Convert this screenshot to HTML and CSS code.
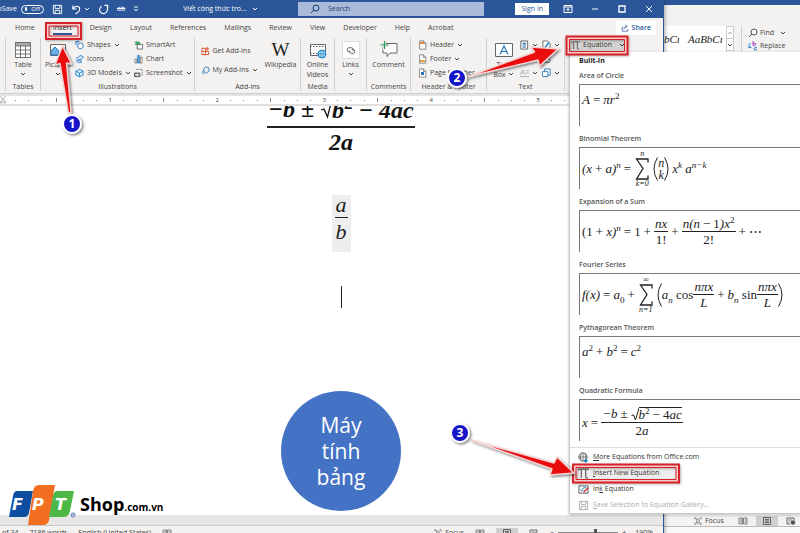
FILE: index.html
```html
<!DOCTYPE html>
<html lang="en">
<head>
<meta charset="utf-8">
<title>Word - Insert Equation</title>
<link rel="stylesheet" href="styles.css">
</head>
<body>
<svg class="defs" aria-hidden="true">
  <symbol id="chev" viewBox="0 0 6 6"><path d="M1 2l2 2 2-2" fill="none" stroke="currentColor"/></symbol>
  <symbol id="save" viewBox="0 0 12 12"><path d="M1.500 1.500h9v9h-9zM3.500 1.500v3.500h5v-3.500M3.500 10.500v-3.500h5v3.500" fill="none" stroke="currentColor"/></symbol>
  <symbol id="pi" viewBox="0 0 10 10"><path d="M0 2.500Q.5 1 2 1h8M3 1v8M7 1v7q0 1.500 2 1" fill="none" stroke="#555"/></symbol>
  <symbol id="book" viewBox="0 0 10 8"><path d="M1 1h3.500v6H1zM5.500 1H9v6H5.500zM2 3h2M2 5h2M6.500 3h2M6.500 5h2" fill="none" stroke="#666" stroke-width=".8"/></symbol>
  <symbol id="print" viewBox="0 0 10 8"><path d="M1.500 .5h7v7h-7zM3 2.500h4M3 4h4M3 5.500h4" fill="none" stroke="#555" stroke-width=".9"/></symbol>
  <symbol id="web" viewBox="0 0 10 8"><path d="M1 1h7v2M1 1v6h3M2.500 3h3M2.500 5h1" fill="none" stroke="#555" stroke-width=".9"/><circle cx="7" cy="5.500" r="2.300" fill="#555"/></symbol>
  <symbol id="focus" viewBox="0 0 10 10"><path d="M1 3V1h2M7 1h2v2M1 7v2h2M9 7v2H7M3.500 2.500h2l1 1v4h-3z" fill="none" stroke="#555" stroke-width=".9"/></symbol>
  <symbol id="page" viewBox="0 0 10 12"><path d="M1.500 1h4.500l3 3v7H1.500zM6 1v3h3" fill="#fff" stroke="#666" stroke-width=".9"/></symbol>
</svg>

<div class="desktop">
  <section class="back-window" aria-label="Background document">
    <div class="back-title"></div>
    <div class="back-ribbon">
      <div class="styles"><span>bC&#305;</span><span>AaBbC&#305;</span></div>
      <div class="styles-nav"><button aria-label="Up"><svg class="chev up"><use href="#chev"/></svg></button><button aria-label="More"><svg class="chev"><use href="#chev"/></svg></button></div>
      <div class="editing">
        <button><svg viewBox="0 0 10 10"><circle cx="6" cy="4" r="3" fill="none" stroke="#555"/><path d="M4 6L1 9" stroke="#555"/></svg>Find<svg class="chev"><use href="#chev"/></svg></button>
        <button><svg viewBox="0 0 10 10"><path d="M2.500 2Q0 3 1.500 7l2-1M1.500 7L0 5.500" fill="none" stroke="#2b7cc4"/><path d="M5 0v4.500M5 2.500q3-1 3 .7T5 4.300" fill="none" stroke="#b146c2"/><path d="M9 6.800q-3-1-3 1t3 1" fill="none" stroke="#2b7cc4"/></svg>Replace</button>
      </div>
    </div>
    <div class="back-page"></div>
    <div class="back-status"><span><svg><use href="#focus"/></svg>Focus</span><svg><use href="#book"/></svg><span class="active"><svg><use href="#print"/></svg></span><svg><use href="#web"/></svg></div>
    <div class="back-bottom"></div>
  </section>

  <main class="window">
    <header class="titlebar">
      <div class="quick">
        <span class="autosave">AutoSave</span>
        <button class="toggle"><i></i>Off</button>
        <button aria-label="Save"><svg class="q-icon"><use href="#save"/></svg></button>
        <button aria-label="Undo" class="undo"><svg class="q-icon" viewBox="0 0 12 12"><path d="M2 1.500v4h4M2 5.500C4 1.500 9 1.500 9.500 5S7 9 5 11" fill="none" stroke="#fff" stroke-width="1.200"/></svg><svg class="chev"><use href="#chev"/></svg></button>
        <button aria-label="Redo"><svg class="q-icon" viewBox="0 0 12 12"><path d="M7 1.500h3.500V5M10 2.500C11.500 7 9 10.500 6 10.500S1 8 2 5q.5-1.500 2-2.500" fill="none" stroke="#fff" stroke-width="1.200"/></svg></button>
        <button class="strike">ab</button>
        <button aria-label="Customize"><svg class="q-more" viewBox="0 0 6 6"><path d="M1 1h4M1 3l2 2 2-2" fill="none" stroke="#fff"/></svg></button>
        <span class="doc-name">Viết công thức tro...<svg class="chev"><use href="#chev"/></svg></span>
      </div>
      <label class="search"><svg viewBox="0 0 10 10"><circle cx="6" cy="4" r="3" fill="none" stroke="#1c3c70"/><path d="M4 6L1 9" stroke="#1c3c70"/></svg><input type="text" placeholder="Search" aria-label="Search"></label>
      <div class="win-controls">
        <button class="signin">Sign in</button>
        <button aria-label="Ribbon options"><svg viewBox="0 0 10 10"><path d="M1 1.500h8v7H1zM1 3h8M5 7.500V4.500M3.500 6L5 4.500 6.500 6" fill="none" stroke="#fff"/></svg></button>
        <button aria-label="Minimize"><svg viewBox="0 0 10 10"><path d="M2 5h6" stroke="#fff"/></svg></button>
        <button aria-label="Maximize"><svg viewBox="0 0 10 10"><path d="M2 2h6v6H2z" fill="none" stroke="#fff" stroke-width="1.300"/></svg></button>
        <button aria-label="Close"><svg viewBox="0 0 10 10"><path d="M2 2l6 6M8 2L2 8" stroke="#fff"/></svg></button>
      </div>
    </header>

    <nav class="tabs">
      <a href="#">Home</a><a href="#" class="on">Insert</a><a href="#">Design</a><a href="#">Layout</a><a href="#">References</a><a href="#">Mailings</a><a href="#">Review</a><a href="#">View</a><a href="#">Developer</a><a href="#">Help</a><a href="#">Acrobat</a>
      <button class="share"><svg viewBox="0 0 10 10"><path d="M3 4H1.500v5h7V6M3.500 6.500Q4 3 7 3M5.500 1L8 3 5.500 5" fill="none" stroke="#2b579a" stroke-width=".9"/></svg>Share</button>
    </nav>

    <div class="ribbon">
      <section class="group g-edge"></section>
      <section class="group g-tables">
        <div class="tools"><button class="big"><svg viewBox="0 0 18 18"><path d="M1 1h16v16H1z" fill="#fff"/><path d="M1 1h16v4H1z" fill="#aaa"/><path d="M1.500 1.500h15v15h-15zM1.500 5h15M1.500 9h15M1.500 13h15M6.500 5v12M11.500 5v12" fill="none" stroke="#666" stroke-width=".9"/></svg><span>Table</span><svg class="chev"><use href="#chev"/></svg></button></div>
        <h2>Tables</h2>
      </section>
      <section class="group g-illus">
        <div class="tools">
          <button class="big"><svg viewBox="0 0 18 18"><path d="M1.500 3.500h15v11h-15z" fill="#fff" stroke="#666"/><path d="M2 14V10l4-4 4 4v4z" fill="#6cb0e6" stroke="#2a75b8"/><path d="M10 10l2-2 4 4v2h-6z" fill="#b8daf4"/><circle cx="13.500" cy="6" r="1.200" fill="#e59a3d"/></svg><span>Pictures</span><svg class="chev"><use href="#chev"/></svg></button>
          <div class="stack s1">
            <button><svg viewBox="0 0 10 10"><path d="M1 5V1h4" fill="#9ccbf0" stroke="#2a75b8"/><circle cx="6" cy="6" r="3.200" fill="#fff" stroke="#2a75b8"/></svg>Shapes<svg class="chev"><use href="#chev"/></svg></button>
            <button><svg viewBox="0 0 10 10"><path d="M1 4q3 0 4-2.500 2-1 3 .5L9.500 3 8 4Q7 7 4 6M2 6l5 1v2H3Q1 8 2 6" fill="#cfe6f8" stroke="#2a75b8" stroke-width=".9"/></svg>Icons</button>
            <button><svg viewBox="0 0 10 10"><path d="M5 .8l4 2.200v4.200L5 9.200 1 7.200V3zM1 3l4 2.200L9 3M5 5.200v4" fill="#e6f3fc" stroke="#1581c8"/></svg>3D Models<svg class="chev"><use href="#chev"/></svg></button>
          </div>
          <div class="stack s2">
            <button><svg viewBox="0 0 10 10"><path d="M.5 1h5l2 2-2 2h-5l1.500-2z" fill="#45a868"/><path d="M3.500 4.500h6v5h-6z" fill="#fff" stroke="#666"/></svg>SmartArt</button>
            <button><svg viewBox="0 0 10 10"><path d="M1 5h2v4.500H1z" fill="#fff" stroke="#666" stroke-width=".8"/><path d="M4 1h2v8.500H4z" fill="#5ba5df" stroke="#2a75b8" stroke-width=".8"/><path d="M7 3h2v6.500H7z" fill="#fff" stroke="#666" stroke-width=".8"/></svg>Chart</button>
            <button><svg viewBox="0 0 10 10"><path d="M2 1h7v7" fill="none" stroke="#666" stroke-dasharray="1.500 1"/><path d="M.5 5h6v4h-6z" fill="#aaa" stroke="#555"/><circle cx="3.500" cy="7" r="1" fill="#fff"/></svg>Screenshot<svg class="chev"><use href="#chev"/></svg></button>
          </div>
        </div>
        <h2>Illustrations</h2>
      </section>
      <section class="group g-addins">
        <div class="tools">
          <div class="stack two">
            <button><svg viewBox="0 0 10 10"><path d="M1 2h4v7H1zM1 5.500h7.500V9H1M7 .5v4M5 2.500h4" fill="none" stroke="#d8512b"/></svg>Get Add-ins</button>
            <button><svg viewBox="0 0 10 10"><path d="M5 1.500L8.500 2.500 9 6 6 8.500 3.500 7 3 3.500zM3 6a1.500 1.500 0 1 0 1 2.500" fill="none" stroke="#2a75b8"/></svg>My Add-ins<svg class="chev"><use href="#chev"/></svg></button>
          </div>
          <button class="big wiki"><b>W</b><span>Wikipedia</span></button>
        </div>
        <h2>Add-ins</h2>
      </section>
      <section class="group g-media">
        <div class="tools"><button class="big"><svg viewBox="0 0 18 18"><path d="M1.500 3.500h15v11h-15z" fill="#fff" stroke="#666"/><path d="M1 5.500h16M1 12.500h16" stroke="#555" stroke-dasharray="1.500 1.500"/><circle cx="13" cy="13" r="4" fill="#d9eefb" stroke="#1581c8"/><path d="M9 13h8M13 9v8M11.500 9.500q-1 3.500 0 7M14.500 9.500q1 3.500 0 7" fill="none" stroke="#1581c8" stroke-width=".7"/></svg><span>Online<br>Videos</span></button></div>
        <h2>Media</h2>
      </section>
      <section class="group g-links">
        <div class="tools"><button class="big boxed"><svg viewBox="0 0 18 18"><path d="M8 11H6.500a2.300 2.300 0 0 1 0-4.500h3a2.300 2.300 0 0 1 1.500 4M10 8.500h1.500a2.300 2.300 0 0 1 0 4.500h-2A2.300 2.300 0 0 1 8 9.500" fill="none" stroke="#555"/></svg><span>Links</span><svg class="chev"><use href="#chev"/></svg></button></div>
      </section>
      <section class="group g-comments">
        <div class="tools"><button class="big"><svg viewBox="0 0 18 18"><path d="M3 2.500h14v9.500h-7l-3 3.500V12H3z" fill="#fff" stroke="#666"/><path d="M4.500 0v9M0 4.500h9" stroke="#f3f2f1" stroke-width="3"/><path d="M4.500 0v8M.5 4h8" stroke="#2f9a58" stroke-width="1.200"/></svg><span>Comment</span></button></div>
        <h2>Comments</h2>
      </section>
      <section class="group g-hf">
        <div class="tools"><div class="stack">
          <button><svg><use href="#page"/><path d="M2 2h4v2H2z" fill="#e08a3c"/></svg>Header<svg class="chev"><use href="#chev"/></svg></button>
          <button><svg><use href="#page"/><path d="M2 6h5v2H2z" fill="#e0a13c"/></svg>Footer<svg class="chev"><use href="#chev"/></svg></button>
          <button><svg><use href="#page"/><path d="M3 4h3v3H3z" fill="#2a75b8"/></svg>Page Number<svg class="chev"><use href="#chev"/></svg></button>
        </div></div>
        <h2>Header &amp; Footer</h2>
      </section>
      <section class="group g-text">
        <div class="tools">
          <button class="big textbox"><svg viewBox="0 0 18 16"><path d="M.5 1.500h17v13H.5z" fill="#fff" stroke="#666"/><path d="M5 12.500L9 4l4 8.500M6.500 9.500h5" fill="none" stroke="#2a75b8" stroke-width="1.200"/></svg><span>Text<br>Box <svg class="chev"><use href="#chev"/></svg></span></button>
          <div class="stack">
            <button aria-label="Quick parts"><svg viewBox="0 0 10 10"><path d="M1 .5h7.500v9H1z" fill="#fff" stroke="#555"/><path d="M3 2.500h3.500v2H3z" fill="#2a75b8"/><path d="M3 6h3.500M3 7.500h3.500" stroke="#2a75b8"/></svg><svg class="chev"><use href="#chev"/></svg></button>
            <button aria-label="WordArt"><svg viewBox="0 0 10 10"><path d="M1 9l3.500-8L8 9M2.500 6h4" fill="none" stroke="#2a75b8"/></svg><svg class="chev"><use href="#chev"/></svg></button>
            <button aria-label="Drop cap"><svg viewBox="0 0 10 10"><path d="M.5 7L3 1.500 5.500 7M1.500 5h3M6.500 2.500H10M6.500 5H10M0 9h10" fill="none" stroke="#aaa"/></svg><svg class="chev"><use href="#chev"/></svg></button>
          </div>
          <div class="stack">
            <button aria-label="Signature"><svg viewBox="0 0 10 10"><path d="M1 .5h5l3 3v6H1z" fill="#fff" stroke="#666"/><path d="M3 8l5-6" stroke="#1581c8" stroke-width="1.600"/></svg><svg class="chev"><use href="#chev"/></svg></button>
            <button aria-label="Date and time"><svg viewBox="0 0 10 10"><path d="M1 1.500h7v7H1z" fill="#fff" stroke="#2a75b8"/><circle cx="6.500" cy="6.500" r="2.500" fill="#fff" stroke="#555"/></svg></button>
            <button aria-label="Object"><svg viewBox="0 0 10 10"><path d="M3 .5h6v7H3z" fill="#fff" stroke="#2a75b8"/><path d="M.5 3.500h6v5.500h-6z" fill="#fff" stroke="#2a75b8"/></svg><svg class="chev"><use href="#chev"/></svg></button>
          </div>
        </div>
        <h2>Text</h2>
      </section>
      <section class="group g-symbols">
        <button class="equation"><svg><use href="#pi"/></svg>Equation<svg class="chev"><use href="#chev"/></svg></button>
      </section>
    </div>

    <div class="ruler">
      <div class="ruler-start"><svg viewBox="0 0 6 12"><path d="M.5.5h5v2L3 5 .5 2.500zM3 5l2.500 2.500v4h-5v-4zM.5 8.500h5" fill="#fff" stroke="#888" stroke-width=".8"/></svg><i></i><i></i><i></i></div>
      <div class="inch"><em></em><i></i><i></i><i></i><b>1</b><i></i><i></i><i></i></div>
      <div class="inch"><em></em><i></i><i></i><i></i><b>2</b><i></i><i></i><i></i></div>
      <div class="inch"><em></em><i></i><i></i><i></i><b>3</b><i></i><i></i><i></i></div>
      <div class="inch"><em></em><i></i><i></i><i></i><b>4</b><i></i><i></i><i></i></div>
      <div class="inch"><em></em><i></i><i></i><i></i><b>5</b><i></i><i></i><i></i></div>
    </div>

    <article class="document">
      <div class="math doc-quad"><span class="frac"><span class="num"><span>−b ± <span class="root"><svg viewBox="0 0 12 20"><path d="M1 12l3-1 3.500 8L12 1" fill="none" stroke="#111" stroke-width="1.300"/></svg><span class="radicand">b<sup>2</sup> − 4ac</span></span></span></span><span class="den">2a</span></span></div>
      <div class="math doc-frac"><span class="frac"><span class="num">a</span><span class="den">b</span></span></div>
      <div class="caret"></div>
      <div class="bubble">Máy<br>tính<br>bảng</div>
    </article>
    <div class="scroll-band"></div>
    <footer class="status">
      <span>of 34</span><span>7186 words</span><span>English (United States)</span><svg><use href="#book"/></svg>
      <div class="views"><span><svg><use href="#focus"/></svg>Focus</span><svg><use href="#book"/></svg><span class="active"><svg><use href="#print"/></svg></span><svg><use href="#web"/></svg></div>
      <div class="zoom"><span>−</span><input type="range" min="0" max="100" value="62" aria-label="Zoom"><span>+</span><span class="pct">190%</span></div>
    </footer>
  </main>

  <aside class="menu">
    <h2>Built-In</h2>
    <ul class="gallery">
      <li><h3>Area of Circle</h3><div class="math"><span>A<o>=</o>πr<sup>2</sup></span></div></li>
      <li><h3>Binomial Theorem</h3><div class="math"><span>(x<o>+</o>a)<sup class="it">n</sup></span><o>=</o><span class="sum"><small>n</small><svg viewBox="0 0 14 22"><use href="#sigma"/></svg><small>k=0</small></span><svg class="paren lead" viewBox="0 0 5 24"><path d="M4.500.5q-7 11.500 0 23" fill="none" stroke="#222"/></svg><span class="binom"><span>n</span><span>k</span></span><svg class="paren" viewBox="0 0 5 24"><path d="M.5.5q7 11.500 0 23" fill="none" stroke="#222"/></svg><span class="gap">x<sup class="it">k</sup> a<sup class="it">n−k</sup></span></div></li>
      <li><h3>Expansion of a Sum</h3><div class="math"><span><r>(1</r><o>+</o>x)<sup class="it">n</sup><o>=</o><r>1</r><o>+</o></span><span class="frac"><span class="num">nx</span><span class="den rm">1!</span></span><o>+</o><span class="frac"><span class="num"><span>n(n<o>−</o><r>1</r>)x<sup>2</sup></span></span><span class="den rm">2!</span></span><o>+</o><r>⋯</r></div></li>
      <li><h3>Fourier Series</h3><div class="math"><span>f(x)<o>=</o>a<sub>0</sub><o>+</o></span><span class="sum"><small>∞</small><svg viewBox="0 0 14 22"><use href="#sigma"/></svg><small>n=1</small></span><svg class="paren lead" viewBox="0 0 5 24"><path d="M4.500.5q-7 11.500 0 23" fill="none" stroke="#222"/></svg><span>a<sub class="it">n</sub> <r>cos</r></span><span class="frac"><span class="num">nπx</span><span class="den">L</span></span><o>+</o><span>b<sub class="it">n</sub> <r>sin</r></span><span class="frac"><span class="num">nπx</span><span class="den">L</span></span><svg class="paren" viewBox="0 0 5 24"><path d="M.5.5q7 11.500 0 23" fill="none" stroke="#222"/></svg></div></li>
      <li><h3>Pythagorean Theorem</h3><div class="math"><span>a<sup>2</sup><o>+</o>b<sup>2</sup><o>=</o>c<sup>2</sup></span></div></li>
      <li><h3>Quadratic Formula</h3><div class="math low"><span>x<o>=</o></span><span class="frac"><span class="num"><span>−b<o>±</o></span><span class="root"><svg viewBox="0 0 8 14"><path d="M.5 8.500L2.500 8l2 5L8 1" fill="none" stroke="#222"/></svg><span class="radicand">b<sup>2</sup><o>−</o><r>4</r>ac</span></span></span><span class="den"><r>2</r>a</span></span></div></li>
    </ul>
    <div class="actions">
      <button><svg viewBox="0 0 12 12"><circle cx="5.500" cy="5.500" r="4.500" fill="#fff" stroke="#555"/><path d="M1 5.500h9M5.500 1v9M3.500 1.500q-2 4 0 8M7.500 1.500q2 4 0 8" fill="none" stroke="#555" stroke-width=".8"/><path d="M8.500 7v4M6.500 9l2 2 2-2" fill="none" stroke="#1581c8" stroke-width="1.300"/></svg><span><u>M</u>ore Equations from Office.com</span></button>
      <button class="hot"><svg><use href="#pi"/></svg><span><u>I</u>nsert New Equation</span></button>
      <button><svg viewBox="0 0 12 12"><path d="M1 2h10v8H1z" fill="#fff" stroke="#555"/><path d="M2.500 6l1.500 2 2-4h3" fill="none" stroke="#1581c8"/><path d="M6 9l5-5" stroke="#d33" stroke-width="1.600"/></svg><span>In<u>k</u> Equation</span></button>
      <button disabled><svg><use href="#save"/></svg><span><u>S</u>ave Selection to Equation Gallery...</span></button>
    </div>
  </aside>

  <div class="brand">
    <svg viewBox="0 0 70 42">
      <path d="M9 7h16l-4 22q-1 4-5 4H1l4-21q1-5 4-5z" fill="#0d4ea2"/>
      <path d="M31 1h16l-6 35q-1 5-6 5H20l5-34q1-6 6-6z" fill="#f26f21"/>
      <path d="M49 7h17l-4 20q-1 6-7 6H41l4-21q1-5 4-5z" fill="#4db848"/>
      <g class="fpt"><text x="4" y="26">F</text><text x="24" y="26">P</text><text x="47" y="26">T</text></g>
      <circle cx="65" cy="31" r="2" fill="#fff" stroke="#2553a0" stroke-width=".8"/><circle cx="65" cy="31" r=".7" fill="#2553a0"/>
    </svg>
    <span class="shop">Shop<small>.com.vn</small></span>
  </div>

  <svg class="callouts" viewBox="0 0 800 533" aria-hidden="true">
    <defs>
      <symbol id="sigma" viewBox="0 0 14 22"><path d="M13 4.500V1H1.500L8 10.500 1.500 21H13v-3.500" fill="none" stroke="#222" stroke-width="1.300"/></symbol>
      <filter id="sh" x="-20%" y="-20%" width="150%" height="150%"><feDropShadow dx="1.500" dy="1.500" stdDeviation="1.200" flood-color="#333" flood-opacity=".6"/></filter>
      <filter id="soft" x="-20%" y="-20%" width="150%" height="150%"><feDropShadow dx="1" dy="1" stdDeviation=".8" flood-color="#333" flood-opacity=".35"/></filter>
    </defs>
    <g filter="url(#soft)" fill="none">
      <g stroke="#f5cccc" stroke-width="3"><path d="M47.500 24.500h32v13h-32z"/><path d="M568 38h58v15h-58z"/><path d="M574.500 466.500h103v14h-103z"/></g>
      <g stroke="#d4202a"><path stroke-width="2" d="M46 23h35v16H46zM566.500 36.500h61v18h-61zM573 464.500h106v18H573z"/><path d="M49 26h29v10H49zM569.500 39.500h55v12h-55zM576 467.500h100v12H576z"/></g>
    </g>
    <g filter="url(#sh)" fill="#ea0c0c" stroke="#f4d4d4" stroke-width="1.400" stroke-linejoin="round">
      <path d="M62.500 46L55 65l5-1.500L68.500 113l2.500-.5L66.500 63l5 1z"/>
      <path d="M467 77L538 60l1.500 6 18.500-17-27-2 3.500 5z"/>
      <path d="M471 440L552 469l-2 6 24-2-17-16-3 6z"/>
    </g>
    <g filter="url(#sh)" fill="#1414c8" stroke="#fff" stroke-width="2"><circle cx="72" cy="124" r="9"/><circle cx="457" cy="78" r="9"/><circle cx="460" cy="433" r="9"/></g>
    <g class="badge-no"><text x="72" y="128">1</text><text x="457" y="82">2</text><text x="460" y="437">3</text></g>
  </svg>
</div>
</body>
</html>
```
FILE: styles.css
```css
* { box-sizing: border-box; margin: 0; padding: 0; }
body { font: 7px/10px "Open Sans", "Noto Sans", sans-serif; color: #444; background: #fff; }
button, input { font: inherit; color: inherit; border: 0; background: none; }
button { display: flex; align-items: center; white-space: nowrap; }
a { color: inherit; text-decoration: none; }
ul { list-style: none; }
svg { display: block; flex: none; }
h2, h3 { font-size: inherit; }
.defs { position: absolute; width: 0; height: 0; }
.desktop { position: relative; height: 100vh; overflow: hidden; }
.chev { width: 6px; height: 6px; }

/* background window */
.back-window { position: absolute; inset: 0; display: flex; flex-direction: column; padding-left: 83%; background: #f3f2f1; }
.back-title { height: 5px; background: #2b579a; }
.back-ribbon { height: 48px; display: flex; padding-top: 21px; }
.styles { display: flex; gap: 8px; width: 62px; padding-top: 6px; background: #fff; overflow: hidden; font: italic 11px/14px "Liberation Serif", serif; color: #222; white-space: nowrap; }
.styles-nav { width: 8px; border: 1px solid #ccc; background: #fff; }
.styles-nav button { width: 6px; height: 12px; border-bottom: 1px solid #ccc; }
.up { transform: rotate(180deg); color: #aaa; }
.editing { margin-left: 7px; padding-left: 6px; border-left: 1px solid #d0d0d0; }
.editing button { height: 13px; gap: 2px; }
.editing svg:first-child { width: 10px; height: 10px; }
.editing .chev { margin-left: 4px; }
.back-page { flex: 1; background: #fff; }
.back-status { height: 12px; display: flex; align-items: center; gap: 14px; padding-left: 29px; border-bottom: 1px solid #bbb; background: #f3f2f1; }
.back-status span, .views span { display: flex; align-items: center; gap: 2px; }
.back-status svg, .views svg, .status > svg { width: 10px; height: 8px; }
.back-status .active, .views .active { padding: 1px 6px; background: #cfcfcf; }
.back-status .active { margin: 0 -6px; }
.back-bottom { height: 6px; background: #f8f8f8; }

/* word window */
.window { position: absolute; left: 0; top: 0; bottom: -6px; width: 83%; display: flex; flex-direction: column; overflow: hidden; background: #f3f2f1; border-right: 1px solid #2b579a; box-shadow: 1px 0 4px #0005; }
.titlebar { height: 18px; flex: none; display: grid; grid-template-columns: 298px minmax(0, 186px) 1fr; align-items: center; background: #2b579a; color: #fff; }
.quick { display: flex; align-items: center; gap: 8px; }
.autosave { width: 17px; display: flex; justify-content: flex-end; margin-right: -4px; overflow: hidden; }
.toggle { gap: 4px; width: 23px; height: 9px; padding: 0 3px; border: 1px solid #fff; border-radius: 5px; font-size: 6px; }
.toggle i { width: 4px; height: 4px; border-radius: 2px; background: #fff; }
.q-icon { width: 11px; height: 11px; }
.undo { gap: 2px; }
.strike { text-decoration: line-through; }
.q-more { width: 6px; height: 6px; }
.doc-name { display: flex; align-items: center; gap: 5px; margin-left: 36px; white-space: nowrap; }
.search { display: flex; align-items: center; gap: 8px; height: 14px; padding-left: 12px; background: #a9bbd8; }
.search svg { width: 10px; height: 10px; }
.search input { width: 100%; color: #1c3c70; }
.search input::placeholder { color: #1c3c70; opacity: 1; }
.win-controls { display: flex; align-items: center; justify-content: flex-end; gap: 17px; padding-right: 9px; }
.win-controls svg { width: 10px; height: 10px; }
.signin { height: 12px; padding: 0 6px; margin-right: -3px; background: #fff; color: #2b579a; }

.tabs { height: 20px; flex: none; display: flex; align-items: center; gap: 18px; padding-left: 15px; }
.tabs .on { border-bottom: 2px solid #2b579a; padding-top: 2px; color: #222; }
.share { margin-left: auto; margin-right: 7px; height: 14px; gap: 3px; padding: 0 5px; background: #fff; color: #2b579a; font-weight: 600; }
.share svg { width: 8px; height: 8px; }

.ribbon { height: 56px; flex: none; display: flex; border-bottom: 1px solid #d0d0d0; }
.group { flex: none; display: flex; flex-direction: column; margin-bottom: 2px; border-right: 1px solid #d0d0d0; }
.group h2 { font-weight: 400; text-align: center; line-height: 9px; white-space: nowrap; }
.tools { flex: 1; display: flex; justify-content: center; }
.g-edge { width: 6px; }
.g-tables { width: 35px; }
.g-illus { width: 154px; }
.g-addins { width: 106px; }
.g-media { width: 34px; }
.g-links { width: 32px; }
.g-comments { width: 44px; }
.g-hf { width: 76px; }
.g-text { width: 78px; }
.g-symbols { flex: 1; padding-left: 3px; border: 0; }
.big { flex-direction: column; align-self: flex-start; width: 34px; padding-top: 3px; }
.big > svg:first-child { width: 18px; height: 18px; margin-bottom: 1px; }
.big .chev { margin-top: 1px; }
.boxed > svg:first-child { background: #fff; border: 1px solid #ddd; }
.stack { display: flex; flex-direction: column; }
.stack button { height: 14px; gap: 3px; }
.stack button > svg:first-child { width: 9px; height: 10px; }
.s1 { width: 59px; }
.s2 { flex: 1; }
.two { width: 66px; padding: 3px 0 0 4px; }
.two button { height: 19px; }
.wiki { width: 36px; }
.wiki b { height: 19px; font: 19px/18px "Liberation Serif", serif; color: #222; }
.g-hf .tools { justify-content: flex-start; padding-left: 7px; }
.textbox { width: 32px; }
.textbox span .chev { display: inline-block; margin: 0; }
.g-text .stack { width: 22px; }
.equation { height: 14px; width: 58px; gap: 3px; padding-left: 3px; background: #d4d2d0; color: #333; }
.equation svg:first-child { width: 9px; height: 9px; }
.equation .chev { margin-left: 4px; }

.ruler { height: 12px; flex: none; display: flex; align-items: center; border-top: 2px solid #e4e4e4; border-bottom: 2px solid #e0e0e0; background: #fff; overflow: hidden; }
.ruler-start { width: 50px; flex: none; display: flex; align-items: center; gap: 12px; }
.ruler-start svg { width: 6px; height: 10px; margin-right: -3px; }
.inch { width: 107px; flex: none; display: grid; grid-template-columns: repeat(8, 1fr); align-items: center; justify-items: center; }
.ruler i { width: 1px; height: 1px; background: #888; }
.ruler em { width: 1px; height: 4px; background: #888; }
.ruler b { font-weight: 400; font-size: 6px; line-height: 8px; }

.document { flex: 1; min-height: 0; overflow: hidden; display: flex; flex-direction: column; align-items: center; padding-left: 19px; background: #fff; }
.math { font-family: "Liberation Serif", serif; font-style: italic; color: #222; white-space: nowrap; }
.frac { display: inline-flex; flex-direction: column; align-items: center; }
.num { align-self: stretch; display: flex; justify-content: center; border-bottom: 1px solid #222; }
sup, sub { font-size: 70%; line-height: 0; font-style: normal; }
.it { font-style: italic; }
r, .rm { font-style: normal; }
.root { display: inline-flex; align-items: stretch; }
.radicand { border-top: 1px solid #222; }
.doc-quad { margin-top: -9px; font-size: 24px; font-weight: 700; line-height: 24px; color: #111; }
.doc-quad .num { padding: 0 1px 4px; border-bottom-width: 2px; }
.doc-quad .den { padding-top: 2px; }
.doc-quad .root svg { width: 12px; height: 22px; }
.doc-quad .root { vertical-align: top; }
.doc-frac { width: 19px; height: 57px; margin-top: 41px; display: flex; justify-content: center; align-items: flex-start; background: #eee; font-size: 22px; line-height: 20px; }
.doc-frac .num { padding: 0 1px 2px; }
.doc-frac .den { padding-top: 4px; }
.caret { width: 1px; height: 22px; margin-top: 34px; background: #222; }
.bubble { width: 120px; height: 120px; flex: none; margin-top: 83px; display: flex; align-items: center; justify-content: center; border-radius: 50%; background: #4472c4; color: #fff; font-size: 21px; line-height: 26px; text-align: center; }
.scroll-band { height: 11px; flex: none; background: #e6e6e6; border-bottom: 1px solid #c8c8c8; }
.status { height: 13px; flex: none; display: flex; align-items: center; gap: 11px; padding-left: 2px; white-space: nowrap; }
.views { display: flex; align-items: center; gap: 11px; margin-left: auto; }
.zoom { display: flex; align-items: center; gap: 4px; margin-right: 10px; }
.zoom .pct { margin-left: 5px; }
.zoom input { appearance: none; width: 60px; height: 1px; background: #888; }
.zoom input::-webkit-slider-thumb { appearance: none; width: 3px; height: 8px; background: #555; }

/* equation gallery */
.menu { position: absolute; top: 52px; left: 569px; right: 0; background: #fff; border: solid #c8c8c8; border-width: 0 0 1px 1px; box-shadow: 0 1px 3px #0004; }
.menu h2 { padding: 3px 0 0 9px; line-height: 12px; color: #222; }
.gallery { display: grid; gap: 4px; padding-left: 9px; }
.gallery h3 { padding: 3px 0 2px; line-height: 12px; font-weight: 600; color: #555; }
.gallery .math { display: flex; align-items: center; height: 42px; padding: 0 0 12px 2px; border: solid #777; border-width: 1px 0 0 1px; font-size: 13px; line-height: 14px; overflow: hidden; }
.gallery .math:has(.frac), .gallery .math:has(.sum) { padding-bottom: 0; }
.gallery .math.low { padding-top: 4px; }
.math o { font-style: normal; padding: 0 3px; }
.sum { display: flex; flex-direction: column; align-items: center; width: 16px; }
.sum svg { width: 14px; height: 22px; }
.sum small { font-size: 8px; line-height: 8px; }
.binom { display: flex; flex-direction: column; align-items: center; font-size: 12px; line-height: 12px; }
.paren { width: 5px; height: 24px; }
.paren.lead { margin-left: 3px; }
.gap { margin-left: 3px; }
.gallery .num { padding: 0 1px; }
.gallery .den { padding-top: 1px; }
.gallery .root svg { width: 8px; height: 14px; }
.actions { margin-top: 6px; padding-top: 1px; border-top: 1px solid #ddd; color: #333; }
.actions button { width: 100%; height: 16px; gap: 4px; padding-left: 8px; }
.actions svg { width: 11px; height: 11px; }
.actions .hot { width: 107px; background: #eeecec; }
.actions button:disabled { color: #aaa; }
.actions u { text-underline-offset: 1px; }

.brand { position: absolute; left: 8px; bottom: 7px; display: flex; align-items: center; gap: 2px; }
.brand svg { width: 70px; height: 42px; }
.fpt { font: italic 700 16px "DejaVu Sans", sans-serif; fill: #fff; }
.shop { font: 700 18px/20px "Open Sans", sans-serif; color: #000; }
.shop small { font-size: 10px; font-weight: 700; }

.callouts { position: absolute; left: 0; top: 0; width: 800px; height: 533px; pointer-events: none; }
.badge-no { font: 700 12px "Open Sans", sans-serif; fill: #fff; text-anchor: middle; }
```
